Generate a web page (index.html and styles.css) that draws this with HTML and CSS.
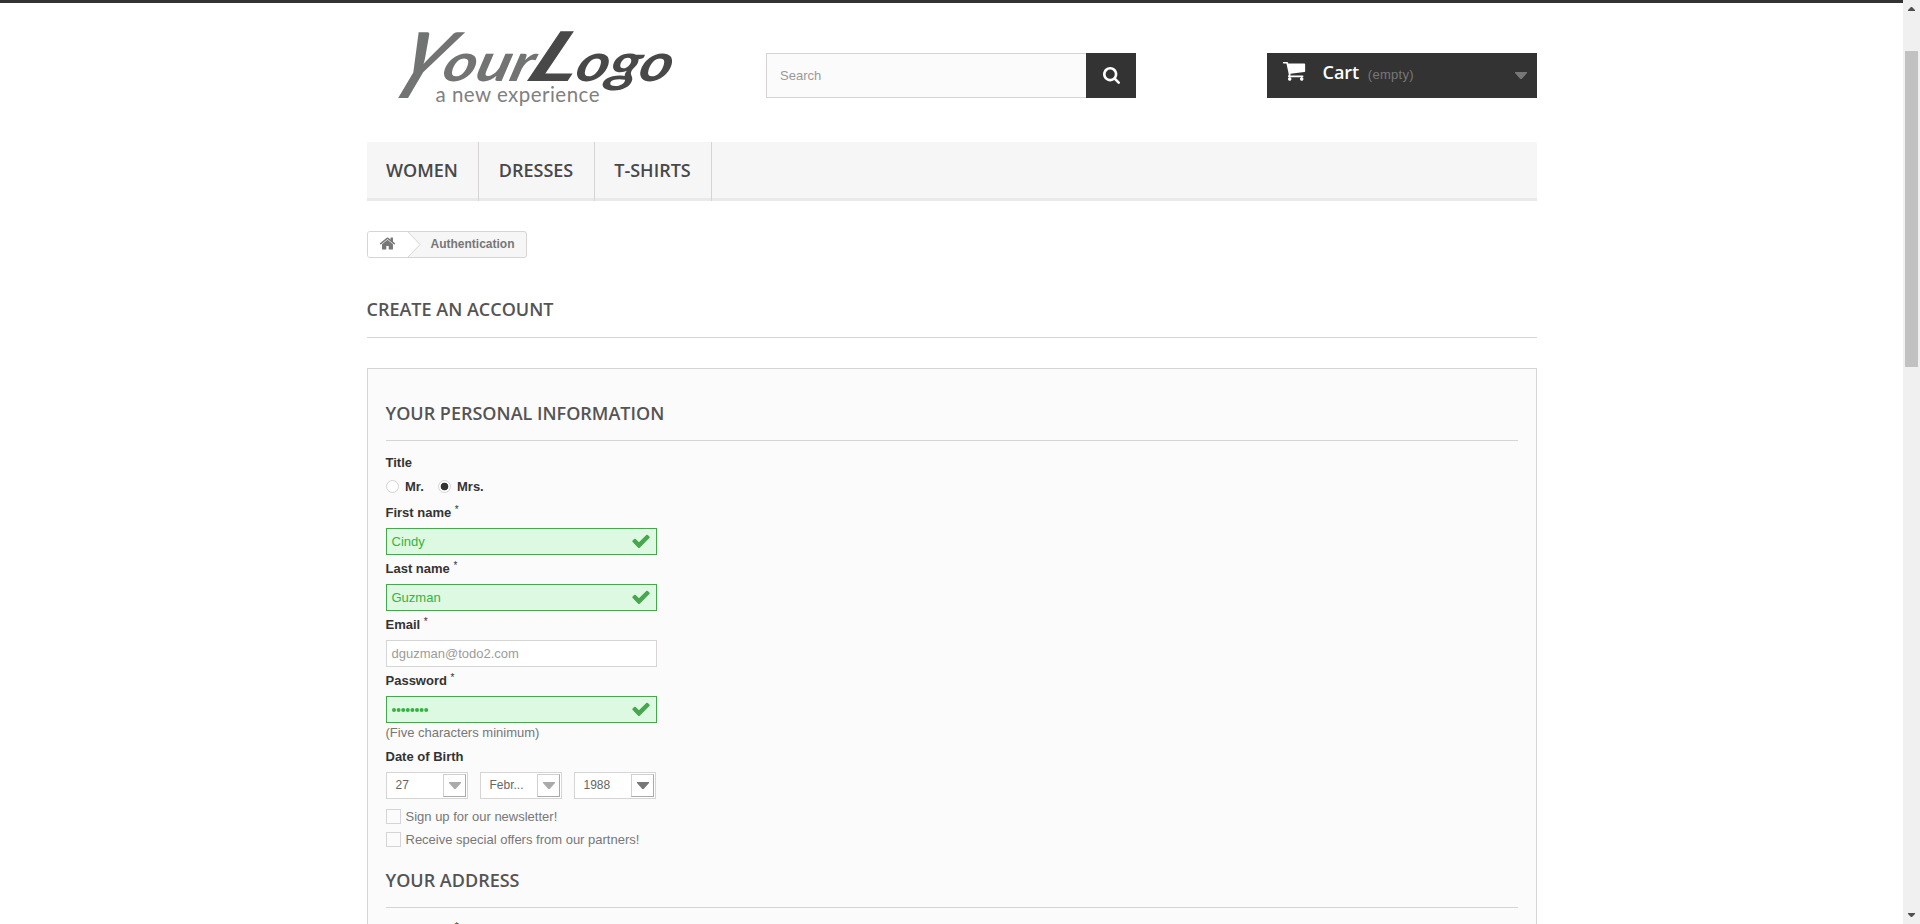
FILE: index.html
```html
<!DOCTYPE html>
<html lang="en">
<head>
<meta charset="utf-8">
<title>Create an account</title>
<link rel="stylesheet" href="styles.css">
</head>
<body>
<svg class="defs" width="0" height="0">
  <symbol id="check" viewBox="0 0 1792 1792"><path d="M1671 566q0 40-28 68l-724 724-136 136q-28 28-68 28t-68-28l-136-136-362-362q-28-28-28-68t28-68l136-136q28-28 68-28t68 28l294 295 656-657q28-28 68-28t68 28l136 136q28 28 28 68z"/></symbol>
  <symbol id="caret" viewBox="0 0 12 7"><path d="M0 0h12v1L6.700 7H5.300L0 1z"/></symbol>
</svg>
<div class="page">
  <main class="viewport">
    <div class="topbar"></div>
    <div class="container">
      <header class="header">
        <svg class="logo" viewBox="0 0 300 80" width="300" height="80">
          <g class="logo-your">
            <text x="38" y="71" font-size="91" transform="translate(0 71) skewX(-26) translate(-22 -71)" textLength="46" lengthAdjust="spacingAndGlyphs">Y</text>
            <text x="73" y="54" font-size="53" transform="translate(0 54) skewX(-16) translate(0 -54)" textLength="90" lengthAdjust="spacingAndGlyphs">our</text>
          </g>
          <g class="logo-mark">
            <text x="156" y="54" font-size="69" transform="translate(0 54) skewX(-26) translate(0 -54)" textLength="50" lengthAdjust="spacingAndGlyphs">L</text>
            <text x="206" y="54" font-size="53" transform="translate(0 54) skewX(-16) translate(0 -54)" textLength="96" lengthAdjust="spacingAndGlyphs">ogo</text>
          </g>
          <text class="logo-tag" x="68.500" y="75" font-size="20.500" textLength="164">a new experience</text>
        </svg>
        <form class="search">
          <span class="search-input">Search</span>
          <span class="search-button"><svg width="17" height="17" viewBox="0 0 1664 1664"><path d="M1152 704q0-185-131.500-316.500t-316.500-131.500-316.500 131.500-131.500 316.500 131.500 316.500 316.500 131.500 316.500-131.500 131.500-316.500zm512 832q0 52-38 90t-90 38q-54 0-90-38l-343-342q-179 124-399 124-143 0-273.500-55.500t-225-150-150-225-55.500-273.500 55.500-273.500 150-225 225-150 273.500-55.500 273.500 55.500 225 150 150 225 55.500 273.500q0 220-124 399l343 343q37 37 37 90z"/></svg></span>
        </form>
        <div class="cart">
          <svg class="cart-icon" width="24" height="20" viewBox="0 190 1792 1500" preserveAspectRatio="none"><path d="M704 1536q0 52-38 90t-90 38-90-38-38-90 38-90 90-38 90 38 38 90zm896 0q0 52-38 90t-90 38-90-38-38-90 38-90 90-38 90 38 38 90zm128-1088v512q0 24-16.500 42.500t-40.500 21.500l-1044 122q13 60 13 70 0 16-24 64h920q26 0 45 19t19 45-19 45-45 19h-1024q-26 0-45-19t-19-45q0-11 8-31.500t16-36 21.500-40 15.500-29.500l-177-823h-204q-26 0-45-19t-19-45 19-45 45-19h256q16 0 28.500 6.500t19.500 15.500 13 24.500 8 26 5.500 29.500 4.500 26h1201q26 0 45 19t19 45z"/></svg>
          <b class="cart-title">Cart</b><span class="cart-empty">(empty)</span>
          <svg class="cart-caret" width="12" height="7"><use href="#caret"/></svg>
        </div>
      </header>
      <nav class="nav"><a class="nav-item women">WOMEN</a><a class="nav-item dresses">DRESSES</a><a class="nav-item shirts">T-SHIRTS</a></nav>
      <div class="breadcrumb">
        <svg class="crumb-home" width="53" height="25" viewBox="0 0 53 25">
          <path class="crumb-bg" d="M0 0H40L52 12.500 40 25H0z"/>
          <path class="crumb-edge" d="M40 0L52 12.500 40 25"/>
          <svg x="11" y="3" width="17" height="17" viewBox="0 0 1792 1792"><path class="crumb-house" d="M1472 992v480q0 26-19 45t-45 19h-384v-384h-256v384h-384q-26 0-45-19t-19-45v-480q0-1 .5-3t.5-3l575-474 575 474q1 2 1 6zm223-69l-62 74q-8 9-21 11h-3q-13 0-21-7l-692-577-692 577q-12 8-24 7-13-2-21-11l-62-74q-8-10-7-23.500t11-21.500l719-599q32-26 76-26t76 26l244 204v-195q0-14 9-23t23-9h192q14 0 23 9t9 23v408l219 182q10 8 11 21.500t-7 23.500z"/></svg>
        </svg>
        <span class="crumb-text">Authentication</span>
      </div>
      <h1 class="heading page-heading">CREATE AN ACCOUNT</h1>
      <section class="box">
        <h3 class="heading sub-heading">YOUR PERSONAL INFORMATION</h3>
        <div class="label title-label">Title</div>
        <div class="radios">
          <span class="radio"></span><b class="radio-text mr">Mr.</b>
          <span class="radio checked"></span><b class="radio-text">Mrs.</b>
        </div>
        <div class="label">First name <sup>*</sup></div>
        <div class="input ok"><span>Cindy</span><svg width="20" height="20"><use href="#check"/></svg></div>
        <div class="label">Last name <sup>*</sup></div>
        <div class="input ok"><span>Guzman</span><svg width="20" height="20"><use href="#check"/></svg></div>
        <div class="label">Email <sup>*</sup></div>
        <div class="input"><span>dguzman@todo2.com</span></div>
        <div class="label">Password <sup>*</sup></div>
        <div class="input ok"><svg class="dots" width="38" height="4"><path d="M2 2H36"/></svg><svg width="20" height="20"><use href="#check"/></svg></div>
        <div class="hint">(Five characters minimum)</div>
        <div class="label dob">Date of Birth</div>
        <div class="selects">
          <div class="select"><span>27</span><em><svg width="12" height="7"><use href="#caret"/></svg></em></div>
          <div class="select"><span>Febr...</span><em><svg width="12" height="7"><use href="#caret"/></svg></em></div>
          <div class="select active"><span>1988</span><em><svg width="12" height="7"><use href="#caret"/></svg></em></div>
        </div>
        <div class="check-row"><span class="checkbox"></span>Sign up for our newsletter!</div>
        <div class="check-row"><span class="checkbox"></span>Receive special offers from our partners!</div>
        <h3 class="heading sub-heading address">YOUR ADDRESS</h3>
        <div class="label next">First name <sup>*</sup></div>
      </section>
    </div>
  </main>
  <aside class="scrollbar">
    <svg width="7" height="4" viewBox="0 0 7 4"><path d="M0 4V3L3 0h1l3 3v1z"/></svg>
    <div class="thumb"></div>
    <svg class="down" width="7" height="4" viewBox="0 0 7 4"><path d="M0 0v1l3 3h1l3-3V0z"/></svg>
  </aside>
</div>
</body>
</html>
```
FILE: styles.css
```css
* { box-sizing: border-box; }
body { margin: 0; background: #fff; color: #777; font: 13px/18px "Liberation Sans", Arial, sans-serif; overflow: hidden; }
.defs { display: none; }
.page { display: flex; width: 1920px; height: 924px; overflow: hidden; }
.viewport { width: 1903px; height: 924px; overflow: hidden; }
.topbar { height: 3px; background: #333; }
.container { width: 1170px; margin: 0 auto; }

/* header */
.header { display: flex; align-items: flex-start; height: 139px; }
.logo { display: block; margin: 24px 99px 0 0; overflow: visible; }
.logo text { font-family: Lato, sans-serif; }
.logo-your text, .logo-mark text { font-style: italic; font-weight: 700; }
.logo-your { fill: #727373; }
.logo-mark { fill: #484848; }
.logo .logo-tag { fill: #808080; }
.search { display: flex; width: 370px; height: 45px; margin-top: 50px; }
.search-input { width: 320px; padding: 0 13.500px; border: 1px solid #d6d4d4; border-right: 0; background: #fbfbfb; color: #999; line-height: 43px; }
.search-button { display: flex; align-items: center; justify-content: center; width: 50px; padding-left: 1px; background: #333; }
.search-button svg { fill: #fff; }
.cart { display: flex; width: 270px; height: 45px; margin: 50px 0 0 131px; padding: 0 9.500px 0 15px; background: #333; }
.cart-icon { margin: 8px 17px 0 0; fill: #fff; }
.cart-title { color: #fff; font: 600 18px/39px "Open Sans", sans-serif; }
.cart-empty { margin-left: 8.500px; color: #777; line-height: 43px; letter-spacing: 0.3px; }
.cart-caret { margin: 19px 0 0 auto; fill: #777; }

/* menu */
.nav { display: flex; height: 59px; background: #f6f6f6; box-shadow: inset 0 -3px #e9e9e9; }
.nav-item { border-right: 1px solid #d6d4d4; color: #484848; font: 600 18px/57px "Open Sans", sans-serif; text-align: center; }
.women { width: 112px; }
.dresses { width: 116px; }
.shirts { width: 117px; }

.breadcrumb { display: flex; width: 160px; height: 27px; margin-top: 30px; border: 1px solid #d6d4d4; border-radius: 3px; background: #f6f6f6; overflow: hidden; }
.crumb-bg { fill: #fff; }
.crumb-edge { fill: none; stroke: #d6d4d4; }
.crumb-house { fill: #777; }
.crumb-text { margin-left: 10px; font-size: 12px; font-weight: bold; line-height: 24px; }

.heading { margin: 0; border-bottom: 1px solid #d6d4d4; color: #555454; font: 600 18px/22px "Open Sans", sans-serif; }
.page-heading { height: 40px; margin: 40px 0 30px; }

/* account form */
.box { height: 700px; padding: 27px 18px 0; border: 1px solid #d6d4d4; background: #fbfbfb; }
.sub-heading { height: 45px; padding-top: 6px; }
.label { height: 29px; padding-top: 5px; color: #333; font-weight: bold; line-height: 18px; }
.label sup { font-size: 10px; font-weight: normal; line-height: 0; vertical-align: 4px; }
.title-label { height: 32px; padding-top: 13px; }
.radios { display: flex; align-items: center; height: 26px; color: #333; }
.radio { width: 13px; height: 13px; border: 1px solid #d6d4d4; border-radius: 50%; background: #fff; }
.checked { background: radial-gradient(circle, #333 0 3.5px, #fff 4.2px); }
.radio-text { margin-left: 6.500px; padding-top: 2px; }
.mr { width: 32.500px; }
.input { display: flex; align-items: center; justify-content: space-between; width: 271px; height: 27px; padding: 0 5px; border: 1px solid #d6d4d4; background: #fff; color: #9c9b9b; }
.ok { border-color: #46a74e; background: #ddf9e1; color: #35b33f; }
.ok svg { margin-bottom: 2px; fill: #46a74e; }
.ok .dots { margin-bottom: 0; fill: none; stroke: #35b33f; stroke-width: 4; stroke-linecap: round; stroke-dasharray: 0 4.600; }
.hint { height: 20px; padding-top: 1px; }
.selects { display: flex; gap: 12px; height: 27px; }
.select { display: flex; justify-content: space-between; width: 82px; padding: 1px 1px 1px 9px; border: 1px solid #d6d4d4; background: #fff; color: #666; font-size: 12px; line-height: 22px; }
.select em { display: flex; align-items: center; justify-content: center; width: 23px; height: 23px; padding-left: 1px; border: 1px solid #d0d0d0; border-bottom-color: #aaa; border-right-color: #aaa; }
.select svg { fill: #aaa; }
.active svg { fill: #777; }
.check-row { display: flex; align-items: center; gap: 5px; height: 15px; margin-top: 8px; }
.checkbox { width: 15px; height: 15px; border: 1px solid #d6d4d4; }
.selects + .check-row { margin-top: 10px; }
.address { height: 45px; margin-top: 16px; }
.next { padding-top: 13px; }

/* window scrollbar */
.scrollbar { display: flex; flex-direction: column; align-items: center; width: 17px; height: 924px; padding: 7px 0; background: #f0f0f0; fill: #505050; }
.thumb { width: 13px; height: 316px; margin-top: 40px; background: #c1c1c1; }
.down { margin-top: auto; }
```
